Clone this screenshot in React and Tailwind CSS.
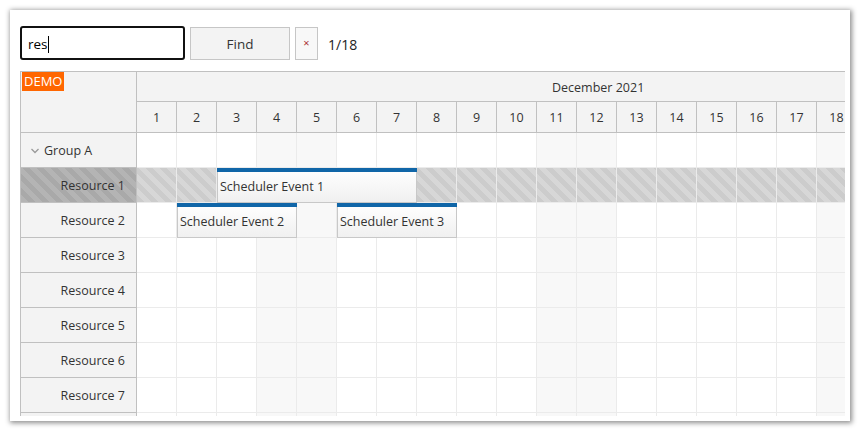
import React from "react";

const days = Array.from({ length: 18 }, (_, i) => i + 1);
const weekend = new Set([4, 5, 11, 12, 18]);
const rows = [
  { id: "g", name: "Group A", group: true },
  { id: "r1", name: "Resource 1", disabled: true },
  { id: "r2", name: "Resource 2" },
  { id: "r3", name: "Resource 3" },
  { id: "r4", name: "Resource 4" },
  { id: "r5", name: "Resource 5" },
  { id: "r6", name: "Resource 6" },
  { id: "r7", name: "Resource 7" },
  { id: "r8", name: "" },
];

function Event({ left, width, text }) {
  return (
    <div
      className="absolute top-0 h-[35px] border border-[#c8c8c8] bg-[linear-gradient(#ffffff,#f0f0f0)] text-[#333] flex flex-col"
      style={{ left, width }}
    >
      <div className="h-[4px] bg-[#1066a8] -mx-px -mt-px" />
      <div className="pl-[2px] pt-[6px] leading-[18px] whitespace-nowrap">{text}</div>
    </div>
  );
}

export default function App() {
  return (
    <div className="w-[860px] h-[431px] bg-white overflow-hidden font-['Segoe_UI','Open_Sans',sans-serif] text-[12.5px] text-[#333]">
      <div className="ml-[10px] mt-[10px] w-[840px] h-[411px] bg-white shadow-[1px_1px_5px_1px_rgba(0,0,0,0.45)] flex flex-col">
        <div className="flex items-center pl-[10px] mt-[16px] h-[34px]">
          <div className="w-[165px] h-[34px] border-2 border-[#111] rounded-[3px] flex items-center pl-[6px] pt-[2px] text-[13.5px] text-black">
            res<span className="w-px h-[17px] bg-black" />
          </div>
          <div className="ml-[5px] w-[100px] h-[33px] bg-[#f3f3f3] border border-[#c6c6c6] flex items-center justify-center pt-[2px] text-[13.5px] text-[#333]">
            Find
          </div>
          <div className="ml-[5px] w-[23px] h-[33px] border border-[#c6c6c6] bg-[#f8f8f8] flex items-center justify-center pt-[1px] text-[11px] text-[#a33]">
            ×
          </div>
          <div className="ml-[10px] pt-[2px] text-[14px] text-[#222]">1/18</div>
        </div>

        <div className="ml-[10px] mt-[11px] w-[825px] h-[345px] overflow-hidden border-l border-t border-[#c0c0c0]">
          {/* header */}
          <div className="flex">
            <div className="w-[116px] shrink-0 h-[61px] bg-[#f3f3f3] border-r border-b border-[#c0c0c0] relative">
              <span className="absolute left-[1px] top-0 bg-[#ff6600] text-white text-[13px] leading-[19px] px-[2px]">
                DEMO
              </span>
            </div>
            <div className="w-[720px] shrink-0 flex flex-col">
              <div className="h-[30px] bg-[#f3f3f3] border-b border-[#c0c0c0] flex items-center pt-[3px] pl-[415px] whitespace-nowrap">
                December 2021
              </div>
              <div className="h-[31px] flex bg-[#f3f3f3] border-b border-[#c0c0c0]">
                {days.map((d) => (
                  <div
                    key={d}
                    className="w-[40px] shrink-0 border-r border-[#c0c0c0] flex items-center justify-center pt-[3px]"
                  >
                    {d}
                  </div>
                ))}
              </div>
            </div>
          </div>

          {/* rows */}
          {rows.map((r) => (
            <div key={r.id} className="flex h-[35px]">
              <div
                className={
                  "w-[116px] shrink-0 border-r border-b border-[#c0c0c0] flex items-center pt-[3px] " +
                  (r.disabled
                    ? "bg-[image:repeating-linear-gradient(45deg,#b4b4b4_0,#b4b4b4_5px,#a9a9a9_5px,#a9a9a9_10px)] justify-end pr-[11px]"
                    : r.group
                    ? "bg-[#f3f3f3] pl-[9px]"
                    : "bg-[#f3f3f3] justify-end pr-[11px]")
                }
              >
                {r.group && (
                  <svg width="10" height="10" viewBox="0 0 10 10" className="mr-[4px] -mt-[2px]">
                    <path d="M1.5 3 L5 6.5 L8.5 3" fill="none" stroke="#999" strokeWidth="1.3" />
                  </svg>
                )}
                <span className="whitespace-nowrap">{r.name}</span>
              </div>
              <div className="w-[720px] shrink-0 relative flex">
                {days.map((d) => (
                  <div
                    key={d}
                    className={
                      "w-[40px] h-[35px] shrink-0 border-r border-b " +
                      (r.disabled
                        ? "border-[#ebebeb] bg-[image:repeating-linear-gradient(45deg,#cccccc_0,#cccccc_5px,#d7d7d7_5px,#d7d7d7_10px)]"
                        : weekend.has(d)
                        ? "border-[#ebebeb] bg-[#f8f8f8]"
                        : "border-[#ebebeb] bg-white")
                    }
                  />
                ))}
                {r.id === "r1" && <Event left={80} width={200} text="Scheduler Event 1" />}
                {r.id === "r2" && (
                  <>
                    <Event left={40} width={120} text="Scheduler Event 2" />
                    <Event left={200} width={120} text="Scheduler Event 3" />
                  </>
                )}
              </div>
            </div>
          ))}
        </div>
      </div>
    </div>
  );
}
